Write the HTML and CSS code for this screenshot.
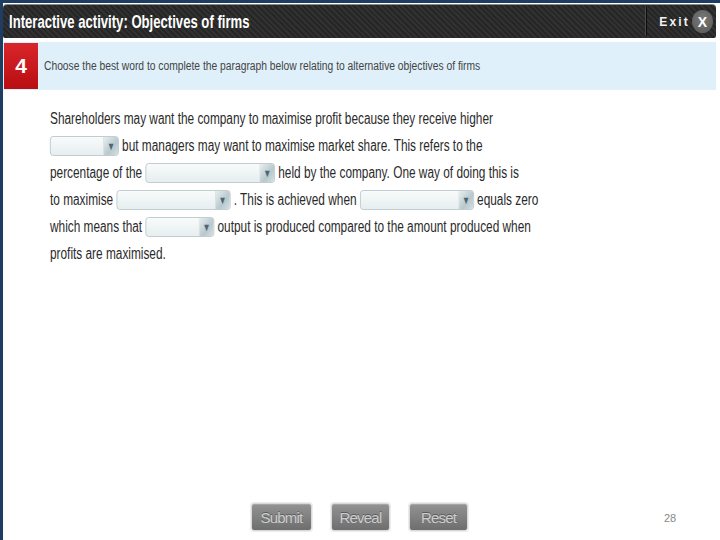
FILE: index.html
```html
<!DOCTYPE html>
<html lang="en">
<head>
<meta charset="utf-8">
<title>Interactive activity: Objectives of firms</title>
<link rel="stylesheet" href="styles.css">
</head>
<body>
<div class="frame">
  <header class="topbar">
    <h1 class="title"><span class="cond">Interactive activity: Objectives of firms</span></h1>
    <div class="exit">
      <span class="exit-label">Exit</span>
      <span class="exit-x">X</span>
    </div>
  </header>

  <section class="instr">
    <div class="num">4</div>
    <p class="instr-text"><span class="cond">Choose the best word to complete the paragraph below relating to alternative objectives of firms</span></p>
  </section>

  <div class="para">
    <div class="line">Shareholders may want the company to maximise profit because they receive higher</div>
    <div class="line"><span class="sel w1"><span class="sel-btn">&#9660;</span></span> but managers may want to maximise market share. This refers to the</div>
    <div class="line">percentage of the <span class="sel w2"><span class="sel-btn">&#9660;</span></span> held by the company. One way of doing this is</div>
    <div class="line">to maximise <span class="sel w3"><span class="sel-btn">&#9660;</span></span> . This is achieved when <span class="sel w3"><span class="sel-btn">&#9660;</span></span> equals zero</div>
    <div class="line">which means that <span class="sel w1"><span class="sel-btn">&#9660;</span></span> output is produced compared to the amount produced when</div>
    <div class="line">profits are maximised.</div>
  </div>

  <footer class="footer">
    <div class="side"></div>
    <div class="buttons">
      <button class="btn">Submit</button>
      <button class="btn">Reveal</button>
      <button class="btn">Reset</button>
    </div>
    <div class="side page"><span class="pagenum">28</span></div>
  </footer>
</div>
</body>
</html>
```

FILE: styles.css
```css
html, body {
  margin: 0;
  padding: 0;
  background: #ffffff;
}

body {
  font-family: "Liberation Sans", Arial, sans-serif;
  width: 720px;
  height: 540px;
  overflow: hidden;
}

.frame {
  box-sizing: border-box;
  width: 720px;
  height: 540px;
  border-top: 3px solid #1d3e60;
  border-left: 3px solid #1d3e60;
  display: flex;
  flex-direction: column;
  overflow: hidden;
  padding-right: 4px;
  background: #ffffff;
}

.cond {
  display: inline-block;
  white-space: nowrap;
  transform-origin: left center;
}

/* header */
.topbar {
  margin-top: 1px;
  height: 34px;
  box-sizing: border-box;
  border-top: 1px solid #8a8a8a;
  border-radius: 4px 4px 2px 2px;
  background-color: #262626;
  background-image: repeating-linear-gradient(45deg, rgba(255,255,255,0.05) 0 2px, rgba(0,0,0,0) 2px 4px);
  display: flex;
  align-items: center;
  justify-content: space-between;
  padding-left: 6px;
  padding-right: 3px;
}

.title {
  margin: 0;
  font-size: 19px;
  font-weight: bold;
  color: #ffffff;
  line-height: 32px;
}

.title .cond {
  transform: scaleX(0.69);
}

.exit {
  display: flex;
  align-items: center;
  height: 29px;
  border-left: 1px solid #0c0c0c;
  box-shadow: -1px 0 0 #4a4a4a;
  padding-left: 12px;
}

.exit-label {
  color: #f2f2f2;
  font-size: 12px;
  font-weight: bold;
  letter-spacing: 2.2px;
  margin-right: 2px;
}

.exit-x {
  width: 21px;
  height: 23px;
  border-radius: 50%;
  background: radial-gradient(circle at 50% 40%, #7a7a7a, #555555);
  color: #ffffff;
  font-size: 14px;
  font-weight: bold;
  display: flex;
  align-items: center;
  justify-content: center;
}

/* instruction band */
.instr {
  margin-top: 4px;
  height: 48px;
  box-sizing: border-box;
  padding: 1px 0 1px 1px;
  background: #dff0fa;
  display: flex;
  align-items: stretch;
}

.num {
  width: 34px;
  background: linear-gradient(#d9262b, #b80d12);
  color: #ffffff;
  font-weight: bold;
  font-size: 21px;
  display: flex;
  align-items: center;
  justify-content: center;
}

.instr-text {
  margin: 0 0 0 6px;
  align-self: center;
  font-size: 12px;
  color: #444444;
}

.instr-text .cond {
  transform: scaleX(0.857);
}

/* paragraph */
.para {
  margin: 15px 0 0 47px;
  width: 720px;
  transform: scaleX(0.74);
  transform-origin: left top;
  font-size: 16px;
  color: #2a2a2a;
}

.line {
  height: 27px;
  line-height: 27px;
  white-space: nowrap;
}

.sel {
  display: inline-block;
  vertical-align: middle;
  position: relative;
  top: -1px;
  height: 20px;
  box-sizing: border-box;
  border: 1px solid #b7c5c9;
  border-radius: 4px;
  background: linear-gradient(#f8fbfb, #e6eef0);
  text-align: right;
  line-height: 18px;
}

.sel.w1 { width: 93px; }
.sel.w2 { width: 175px; }
.sel.w3 { width: 154px; }

.sel-btn {
  display: inline-block;
  width: 19px;
  height: 18px;
  border-left: 1px solid #c9d4d7;
  background: linear-gradient(135deg, #e6eeef, #b8c8cc 60%, #d7e1e3);
  color: #4c6675;
  font-size: 11px;
  text-align: center;
  vertical-align: top;
  border-radius: 0 3px 3px 0;
}

/* footer */
.footer {
  margin-top: auto;
  margin-bottom: 9px;
  display: grid;
  grid-template-columns: 1fr auto 1fr;
  align-items: center;
}

.buttons {
  display: flex;
  gap: 19px;
}

.btn {
  width: 61px;
  height: 28px;
  padding: 0;
  border: 1px solid #d9d9d9;
  border-radius: 3px;
  box-shadow: 0 0 0 1px #ececec, inset 0 1px 0 #a6a6a6;
  background: linear-gradient(#939393, #6e6e6e);
  color: #cdcdcd;
  font-family: "Liberation Sans", Arial, sans-serif;
  font-size: 15px;
  text-shadow: 0 -1px 0 #5c5c5c;
  letter-spacing: -0.8px;
}

.btn + .btn {
  width: 59px;
}

.page {
  padding-left: 196px;
}

.pagenum {
  font-size: 11px;
  color: #888888;
}
```
